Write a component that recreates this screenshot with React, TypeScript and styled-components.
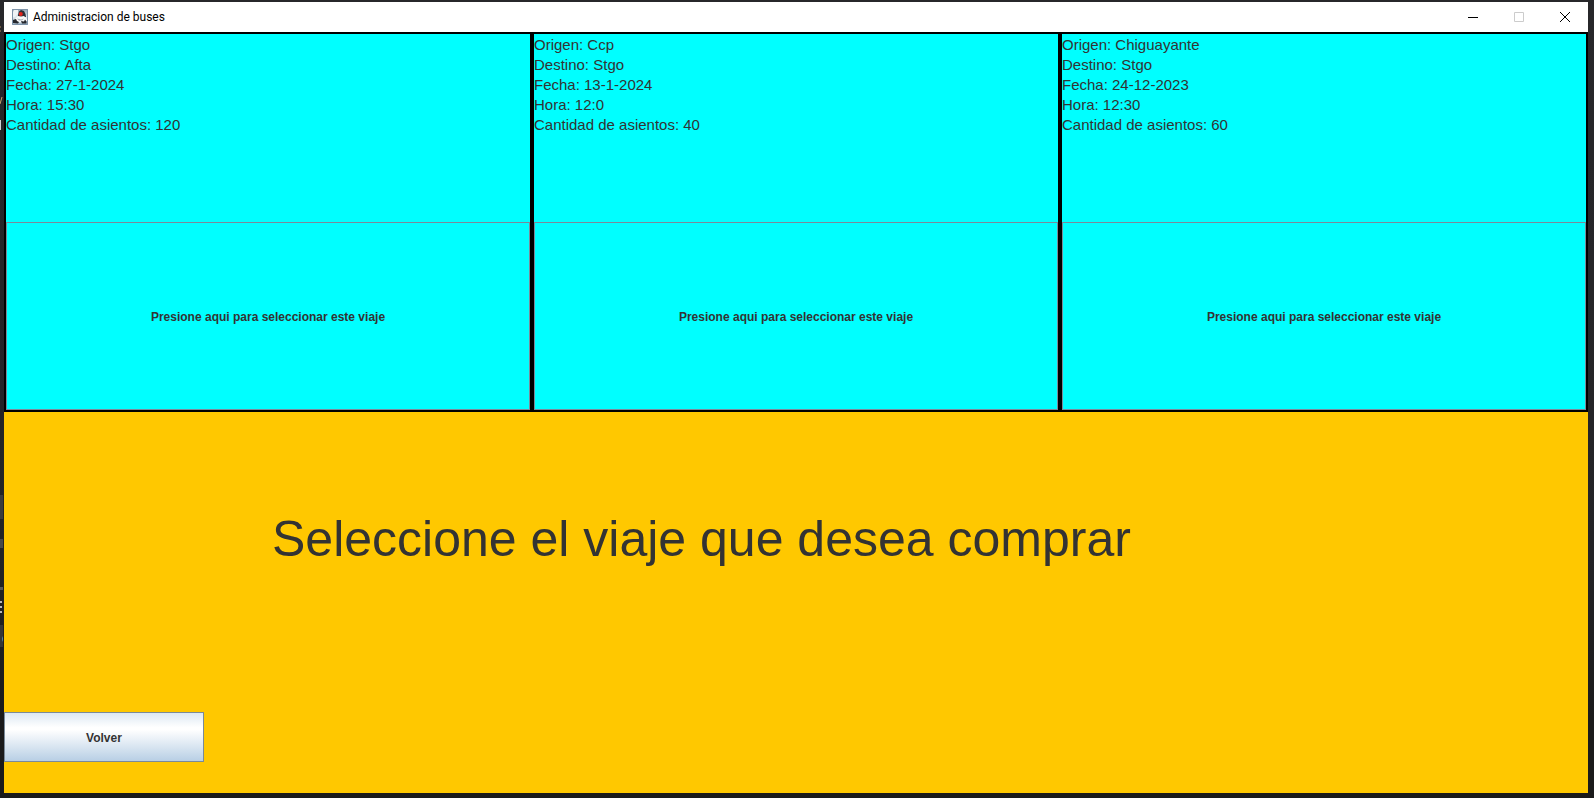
import React from "react";
import styled, { createGlobalStyle } from "styled-components";

const GlobalStyle = createGlobalStyle`
  *, *::before, *::after { box-sizing: border-box; }
  html, body, #root { height: 100%; }
  body { margin: 0; background: #1b1b1c; overflow: hidden; }
`;

const Desktop = styled.div`
  height: 100%;
  min-height: 480px;
  display: flex;
  padding: 2px 6px 5px 0;
  background: linear-gradient(#27272a, #232326 70%, #1a1a1b 90%);
`;

const Backdrop = styled.svg`
  flex: none;
  width: 4px;
  height: 100%;
  overflow: hidden;
  font-family: "Liberation Mono", monospace;
  font-size: 14px;
`;

const Frame = styled.main`
  flex: 1;
  min-width: 0;
  display: flex;
  flex-direction: column;
  font-family: "Liberation Sans", Arial, sans-serif;
  color: #333333;
  background: #ffc800;
`;

const TitleBar = styled.header`
  flex: none;
  height: 30px;
  display: flex;
  align-items: center;
  gap: 5px;
  padding-left: 8px;
  background: #ffffff;
`;

const WindowTitle = styled.span`
  flex: 1;
  font-family: Roboto, "Open Sans", sans-serif;
  font-size: 12px;
  line-height: 16px;
  color: #000000;
`;

const WindowControls = styled.div`
  display: flex;
`;

const WindowButton = styled.button`
  width: 46px;
  height: 30px;
  display: grid;
  place-items: center;
  padding: 0;
  border: 0;
  background: transparent;
  color: #000000;

  &:disabled { color: #cccccc; }
`;

const Content = styled.div`
  flex: 1;
  min-height: 0;
  display: grid;
  grid-template-rows: 380fr 381fr;
`;

const TripList = styled.section`
  min-height: 0;
  display: grid;
  grid-template-columns: repeat(3, 1fr);
`;

const TripCard = styled.article`
  min-width: 0;
  display: grid;
  grid-template-rows: 1fr 1fr;
  border: 2px solid #000000;
  background: #00ffff;
`;

const TripDetails = styled.div`
  font-size: 15px;
  line-height: 20px;
  padding-top: 1px;
`;

const Detail = styled.p`
  margin: 0;
`;

const SwingButton = styled.button`
  font-family: inherit;
  font-size: 12px;
  font-weight: bold;
  line-height: 16px;
  color: #333333;
  padding: 2px 0 0;
  border: 1px solid #7a8a99;
`;

const SelectButton = styled(SwingButton)`
  background: #00ffff;
`;

const BackButton = styled(SwingButton)`
  width: 200px;
  height: 50px;
  background: linear-gradient(#dde8f3, #ffffff 30%, #ffffff 35%, #b8cfe5);
`;

const Prompt = styled.section`
  display: flex;
  flex-direction: column;
  align-items: flex-start;
  justify-content: space-between;
  padding: 98px 0 31px;
`;

const Heading = styled.h1`
  margin: 0;
  padding-left: 268px;
  font-size: 50px;
  font-weight: normal;
  line-height: 58px;
  white-space: nowrap;
`;

const trips = [
  { origin: "Stgo", destination: "Afta", date: "27-1-2024", time: "15:30", seats: 120 },
  { origin: "Ccp", destination: "Stgo", date: "13-1-2024", time: "12:0", seats: 40 },
  { origin: "Chiguayante", destination: "Stgo", date: "24-12-2023", time: "12:30", seats: 60 },
];

const JavaIcon = () => (
  <svg width="16" height="16" viewBox="0 0 16 16" aria-hidden="true">
    <defs>
      <linearGradient id="tile" x1="0" y1="0" x2="0" y2="1">
        <stop offset="0" stopColor="#8fa3b6" />
        <stop offset="0.5" stopColor="#dfe7ee" />
        <stop offset="1" stopColor="#9fb3c6" />
      </linearGradient>
    </defs>
    <rect width="16" height="16" fill="url(#tile)" />
    <path d="M.5.5h15v15H.5z" fill="none" stroke="#7d93a9" />
    <path d="M2 1h4v4l-3 3H1V3z" fill="#eef2f6" />
    <path d="M6 6l1-3.500 2-1.500 3 1 1.500 3 .5 3H6z" fill="#2e3038" />
    <circle cx="8.800" cy="5" r="2" fill="#e5231c" />
    <path d="M3 10l3-3 3 .5 3-.5 3 3v2l-3 1-4 .5-3-1z" fill="#fafafa" />
    <path d="M1 14v-3l3-1 1 2 2 1-1 1.500zM9 12l3 .5 1-2 1.500 2v2H10z" fill="#25272d" />
    <path d="M5 9.500l4 1 3-1-2 2H7z" fill="#a9b0b8" />
  </svg>
);

// Sliver of the editor that stays visible beside the window.
const EditorEdge = () => (
  <Backdrop aria-hidden="true">
    <rect y="493" width="3" height="24" fill="#3b3b3e" />
    <rect y="537" width="3" height="9" fill="#48484b" />
    <rect y="585" width="3" height="3" fill="#58585b" />
    <rect y="623" width="3" height="22" fill="#353538" />
    <path d="M0 599h2v2H0zM0 604h2v2H0zM0 609h2v2H0z" fill="#b9b9bc" />
    <path d="M2 636l1-2v6l-1-2z" fill="#4f7f9f" />
    <path d="M0 25h1M0 29h1" stroke="#b08a5a" />
    <path d="M2 95l-2 7" stroke="#c9a26b" fill="none" />
    <rect y="118" width="1" height="10" fill="#d0d0d2" />
  </Backdrop>
);

export default function App() {
  return (
    <>
      <GlobalStyle />
      <Desktop>
        <EditorEdge />
        <Frame>
          <TitleBar>
            <JavaIcon />
            <WindowTitle>Administracion de buses</WindowTitle>
            <WindowControls>
              <WindowButton aria-label="Minimizar">
                <svg width="10" height="10" viewBox="0 0 10 10"><path d="M0 5h10v1H0z" fill="currentColor" /></svg>
              </WindowButton>
              <WindowButton aria-label="Maximizar" disabled>
                <svg width="10" height="10" viewBox="0 0 10 10"><path d="M.5.5h9v9h-9z" fill="none" stroke="currentColor" /></svg>
              </WindowButton>
              <WindowButton aria-label="Cerrar">
                <svg width="10" height="10" viewBox="0 0 10 10"><path d="M0 0l10 10M10 0L0 10" stroke="currentColor" /></svg>
              </WindowButton>
            </WindowControls>
          </TitleBar>
          <Content>
            <TripList>
              {trips.map((trip) => (
                <TripCard key={trip.date}>
                  <TripDetails>
                    <Detail>Origen: {trip.origin}</Detail>
                    <Detail>Destino: {trip.destination}</Detail>
                    <Detail>Fecha: {trip.date}</Detail>
                    <Detail>Hora: {trip.time}</Detail>
                    <Detail>Cantidad de asientos: {trip.seats}</Detail>
                  </TripDetails>
                  <SelectButton>Presione aqui para seleccionar este viaje</SelectButton>
                </TripCard>
              ))}
            </TripList>
            <Prompt>
              <Heading>Seleccione el viaje que desea comprar</Heading>
              <BackButton>Volver</BackButton>
            </Prompt>
          </Content>
        </Frame>
      </Desktop>
    </>
  );
}
